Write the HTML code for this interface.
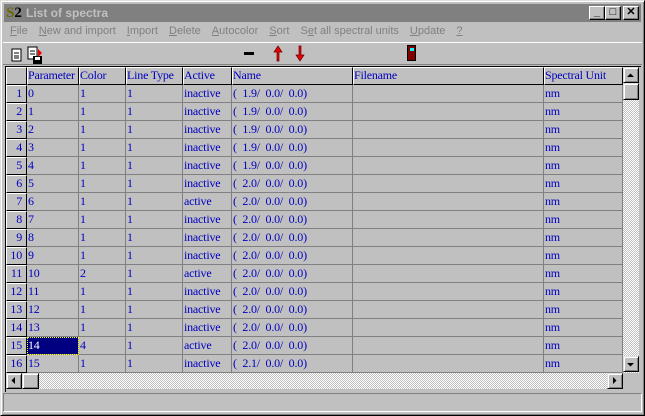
<!DOCTYPE html>
<html><head><style>
*{box-sizing:border-box;margin:0;padding:0}
body{width:645px;height:416px;background:#c0c0c0;position:relative;overflow:hidden;font-family:"Liberation Sans",sans-serif}
.abs{position:absolute}
.win{left:0;top:0;width:645px;height:416px;border:1px solid;border-color:#dfdfdf #000 #000 #dfdfdf;box-shadow:inset 1px 1px #fff,inset -1px -1px #808080}
.title{left:4px;top:4px;width:637px;height:18px;background:#808080;color:#c0c0c0;font-weight:bold;font-size:12px;line-height:18px}
.tb{width:16px;height:14px;top:2px;background:#c0c0c0;border:1px solid;border-color:#fff #000 #000 #fff;box-shadow:inset -1px -1px #808080;font-size:11px;line-height:11px;text-align:center;color:#000;font-weight:bold}
.menu{top:25px;left:10px;font-size:11px;color:#808080;white-space:nowrap}
.menu span{margin-right:11px}
.toolbar{left:3px;top:42px;width:639px;height:23px;border-top:1px solid #fff;border-bottom:1px solid #808080}
.grid{left:5px;top:66px;width:636px;height:326px;border-top:1px solid #000;border-left:1px solid #000}
.row{position:absolute;left:6px;height:18px;display:flex}
.c{height:18px;border-right:1px solid #808080;border-bottom:1px solid #808080;font-family:"Liberation Serif","DejaVu Serif",serif;font-size:12px;letter-spacing:-0.2px;color:#0000c0;line-height:17px;padding-left:1px;white-space:nowrap;overflow:hidden;background:#c0c0c0}
.h{border-top:1px solid #fff;border-left:1px solid #fff;border-right:1px solid #000;border-bottom:1px solid #000;line-height:15px;padding-left:0}
.rh{text-align:right;padding-right:4px}
.w0{width:21px}.w1{width:52px}.w2{width:47px}.w3{width:57px}.w4{width:49px}.w5{width:121px}.w6{width:191px}.w7{width:79px}
.sel{background:#000080;color:#fff;outline:1px dotted #ff0;outline-offset:-1px}
.sb{background:repeating-conic-gradient(#c0c0c0 0 25%,#fff 0 50%) 0 0/2px 2px}
.btn{position:absolute;background:#c0c0c0;border:1px solid;border-color:#dfdfdf #000 #000 #dfdfdf;box-shadow:inset 1px 1px #fff,inset -1px -1px #808080}
.status{left:3px;top:393px;width:639px;height:19px;border:1px solid;border-color:#808080 #fff #fff #808080}
</style></head><body>
<div class="abs win"></div>
<div class="abs title"><span style="position:absolute;left:2px;top:0;font-family:'Liberation Serif',serif;color:#000;font-size:15px;width:16px;height:16px;line-height:17px;top:1px;text-align:center"><span style="color:#6a6a00">S</span>2</span><span style="position:absolute;left:22px">List of spectra</span>
<div class="abs tb" style="left:585px">_</div><div class="abs tb" style="left:601px">□</div><div class="abs tb" style="left:619px">✕</div></div>
<div class="abs menu"><span><u>F</u>ile</span><span><u>N</u>ew and import</span><span><u>I</u>mport</span><span><u>D</u>elete</span><span><u>A</u>utocolor</span><span><u>S</u>ort</span><span>S<u>e</u>t all spectral units</span><span><u>U</u>pdate</span><span><u>?</u></span></div>
<div class="abs toolbar"></div>
<svg class="abs" style="left:10px;top:45px" width="36" height="20">
<rect x="2" y="4" width="9" height="12" fill="#fff" stroke="#000"/><line x1="4" y1="8" x2="9" y2="8" stroke="#000"/><line x1="4" y1="11" x2="9" y2="11" stroke="#000"/><line x1="4" y1="13" x2="9" y2="13" stroke="#000"/>
<rect x="18" y="2" width="9" height="12" fill="#fff" stroke="#000"/><line x1="20" y1="6" x2="25" y2="6" stroke="#000"/><line x1="20" y1="9" x2="25" y2="9" stroke="#000"/>
<rect x="23" y="11" width="9" height="8" fill="#000"/><rect x="25" y="12" width="5" height="3" fill="#fff"/><path d="M28 4 L32 8 L28 12 Z" fill="#e00"/>
</svg>
<div class="abs" style="left:244px;top:52px;width:10px;height:3px;background:#000"></div>
<svg class="abs" style="left:271px;top:45px" width="40" height="18"><path d="M7 1 L11 7 L8 7 L8 16 L6 16 L6 7 L3 7 Z" fill="#e00" stroke="#600" stroke-width=".7"/><path d="M28 1 L30 1 L30 10 L33 10 L29 16 L25 10 L28 10 Z" fill="#e00" stroke="#600" stroke-width=".7"/></svg>
<div class="abs" style="left:407px;top:45px;width:9px;height:16px;background:#800000;border:1px solid #000"><div style="position:absolute;left:2px;top:2px;width:4px;height:3px;background:#0ff"></div></div>
<div class="abs grid"></div>

<div class="row" style="top:67px"><div class="c h w0"></div><div class="c h w1">Parameter</div><div class="c h w2">Color</div><div class="c h w3">Line Type</div><div class="c h w4">Active</div><div class="c h w5">Name</div><div class="c h w6">Filename</div><div class="c h w7">Spectral Unit</div></div>
<div class="row" style="top:85px"><div class="c h rh w0">1</div><div class="c w1">0</div><div class="c w2">1</div><div class="c w3">1</div><div class="c w4">inactive</div><div class="c w5">(&nbsp; 1.9/&nbsp; 0.0/&nbsp; 0.0)</div><div class="c w6"></div><div class="c w7">nm</div></div>
<div class="row" style="top:103px"><div class="c h rh w0">2</div><div class="c w1">1</div><div class="c w2">1</div><div class="c w3">1</div><div class="c w4">inactive</div><div class="c w5">(&nbsp; 1.9/&nbsp; 0.0/&nbsp; 0.0)</div><div class="c w6"></div><div class="c w7">nm</div></div>
<div class="row" style="top:121px"><div class="c h rh w0">3</div><div class="c w1">2</div><div class="c w2">1</div><div class="c w3">1</div><div class="c w4">inactive</div><div class="c w5">(&nbsp; 1.9/&nbsp; 0.0/&nbsp; 0.0)</div><div class="c w6"></div><div class="c w7">nm</div></div>
<div class="row" style="top:139px"><div class="c h rh w0">4</div><div class="c w1">3</div><div class="c w2">1</div><div class="c w3">1</div><div class="c w4">inactive</div><div class="c w5">(&nbsp; 1.9/&nbsp; 0.0/&nbsp; 0.0)</div><div class="c w6"></div><div class="c w7">nm</div></div>
<div class="row" style="top:157px"><div class="c h rh w0">5</div><div class="c w1">4</div><div class="c w2">1</div><div class="c w3">1</div><div class="c w4">inactive</div><div class="c w5">(&nbsp; 1.9/&nbsp; 0.0/&nbsp; 0.0)</div><div class="c w6"></div><div class="c w7">nm</div></div>
<div class="row" style="top:175px"><div class="c h rh w0">6</div><div class="c w1">5</div><div class="c w2">1</div><div class="c w3">1</div><div class="c w4">inactive</div><div class="c w5">(&nbsp; 2.0/&nbsp; 0.0/&nbsp; 0.0)</div><div class="c w6"></div><div class="c w7">nm</div></div>
<div class="row" style="top:193px"><div class="c h rh w0">7</div><div class="c w1">6</div><div class="c w2">1</div><div class="c w3">1</div><div class="c w4">active</div><div class="c w5">(&nbsp; 2.0/&nbsp; 0.0/&nbsp; 0.0)</div><div class="c w6"></div><div class="c w7">nm</div></div>
<div class="row" style="top:211px"><div class="c h rh w0">8</div><div class="c w1">7</div><div class="c w2">1</div><div class="c w3">1</div><div class="c w4">inactive</div><div class="c w5">(&nbsp; 2.0/&nbsp; 0.0/&nbsp; 0.0)</div><div class="c w6"></div><div class="c w7">nm</div></div>
<div class="row" style="top:229px"><div class="c h rh w0">9</div><div class="c w1">8</div><div class="c w2">1</div><div class="c w3">1</div><div class="c w4">inactive</div><div class="c w5">(&nbsp; 2.0/&nbsp; 0.0/&nbsp; 0.0)</div><div class="c w6"></div><div class="c w7">nm</div></div>
<div class="row" style="top:247px"><div class="c h rh w0">10</div><div class="c w1">9</div><div class="c w2">1</div><div class="c w3">1</div><div class="c w4">inactive</div><div class="c w5">(&nbsp; 2.0/&nbsp; 0.0/&nbsp; 0.0)</div><div class="c w6"></div><div class="c w7">nm</div></div>
<div class="row" style="top:265px"><div class="c h rh w0">11</div><div class="c w1">10</div><div class="c w2">2</div><div class="c w3">1</div><div class="c w4">active</div><div class="c w5">(&nbsp; 2.0/&nbsp; 0.0/&nbsp; 0.0)</div><div class="c w6"></div><div class="c w7">nm</div></div>
<div class="row" style="top:283px"><div class="c h rh w0">12</div><div class="c w1">11</div><div class="c w2">1</div><div class="c w3">1</div><div class="c w4">inactive</div><div class="c w5">(&nbsp; 2.0/&nbsp; 0.0/&nbsp; 0.0)</div><div class="c w6"></div><div class="c w7">nm</div></div>
<div class="row" style="top:301px"><div class="c h rh w0">13</div><div class="c w1">12</div><div class="c w2">1</div><div class="c w3">1</div><div class="c w4">inactive</div><div class="c w5">(&nbsp; 2.0/&nbsp; 0.0/&nbsp; 0.0)</div><div class="c w6"></div><div class="c w7">nm</div></div>
<div class="row" style="top:319px"><div class="c h rh w0">14</div><div class="c w1">13</div><div class="c w2">1</div><div class="c w3">1</div><div class="c w4">inactive</div><div class="c w5">(&nbsp; 2.0/&nbsp; 0.0/&nbsp; 0.0)</div><div class="c w6"></div><div class="c w7">nm</div></div>
<div class="row" style="top:337px"><div class="c h rh w0">15</div><div class="c w1 sel">14</div><div class="c w2">4</div><div class="c w3">1</div><div class="c w4">active</div><div class="c w5">(&nbsp; 2.0/&nbsp; 0.0/&nbsp; 0.0)</div><div class="c w6"></div><div class="c w7">nm</div></div>
<div class="row" style="top:355px"><div class="c h rh w0">16</div><div class="c w1">15</div><div class="c w2">1</div><div class="c w3">1</div><div class="c w4">inactive</div><div class="c w5">(&nbsp; 2.1/&nbsp; 0.0/&nbsp; 0.0)</div><div class="c w6"></div><div class="c w7">nm</div></div>

<div class="abs sb" style="left:623px;top:67px;width:16px;height:306px"></div>
<div class="btn" style="left:623px;top:67px;width:16px;height:16px"><svg width="14" height="14"><path d="M3 9 L10 9 L6.5 5.5 Z" fill="#000"/></svg></div>
<div class="btn" style="left:623px;top:83px;width:16px;height:17px"></div>
<div class="btn" style="left:623px;top:356px;width:16px;height:16px"><svg width="14" height="14"><path d="M3 6 L10 6 L6.5 9.5 Z" fill="#000"/></svg></div>
<div class="abs sb" style="left:6px;top:373px;width:617px;height:16px"></div>
<div class="btn" style="left:6px;top:373px;width:16px;height:16px"><svg width="14" height="14"><path d="M8 3 L8 10 L4.5 6.5 Z" fill="#000"/></svg></div>
<div class="btn" style="left:22px;top:373px;width:17px;height:16px"></div>
<div class="btn" style="left:607px;top:373px;width:16px;height:16px"><svg width="14" height="14"><path d="M5 3 L5 10 L8.5 6.5 Z" fill="#000"/></svg></div>
<div class="abs" style="left:623px;top:373px;width:17px;height:17px;background:#c0c0c0"></div>
<div class="abs status"></div>
</body></html>
